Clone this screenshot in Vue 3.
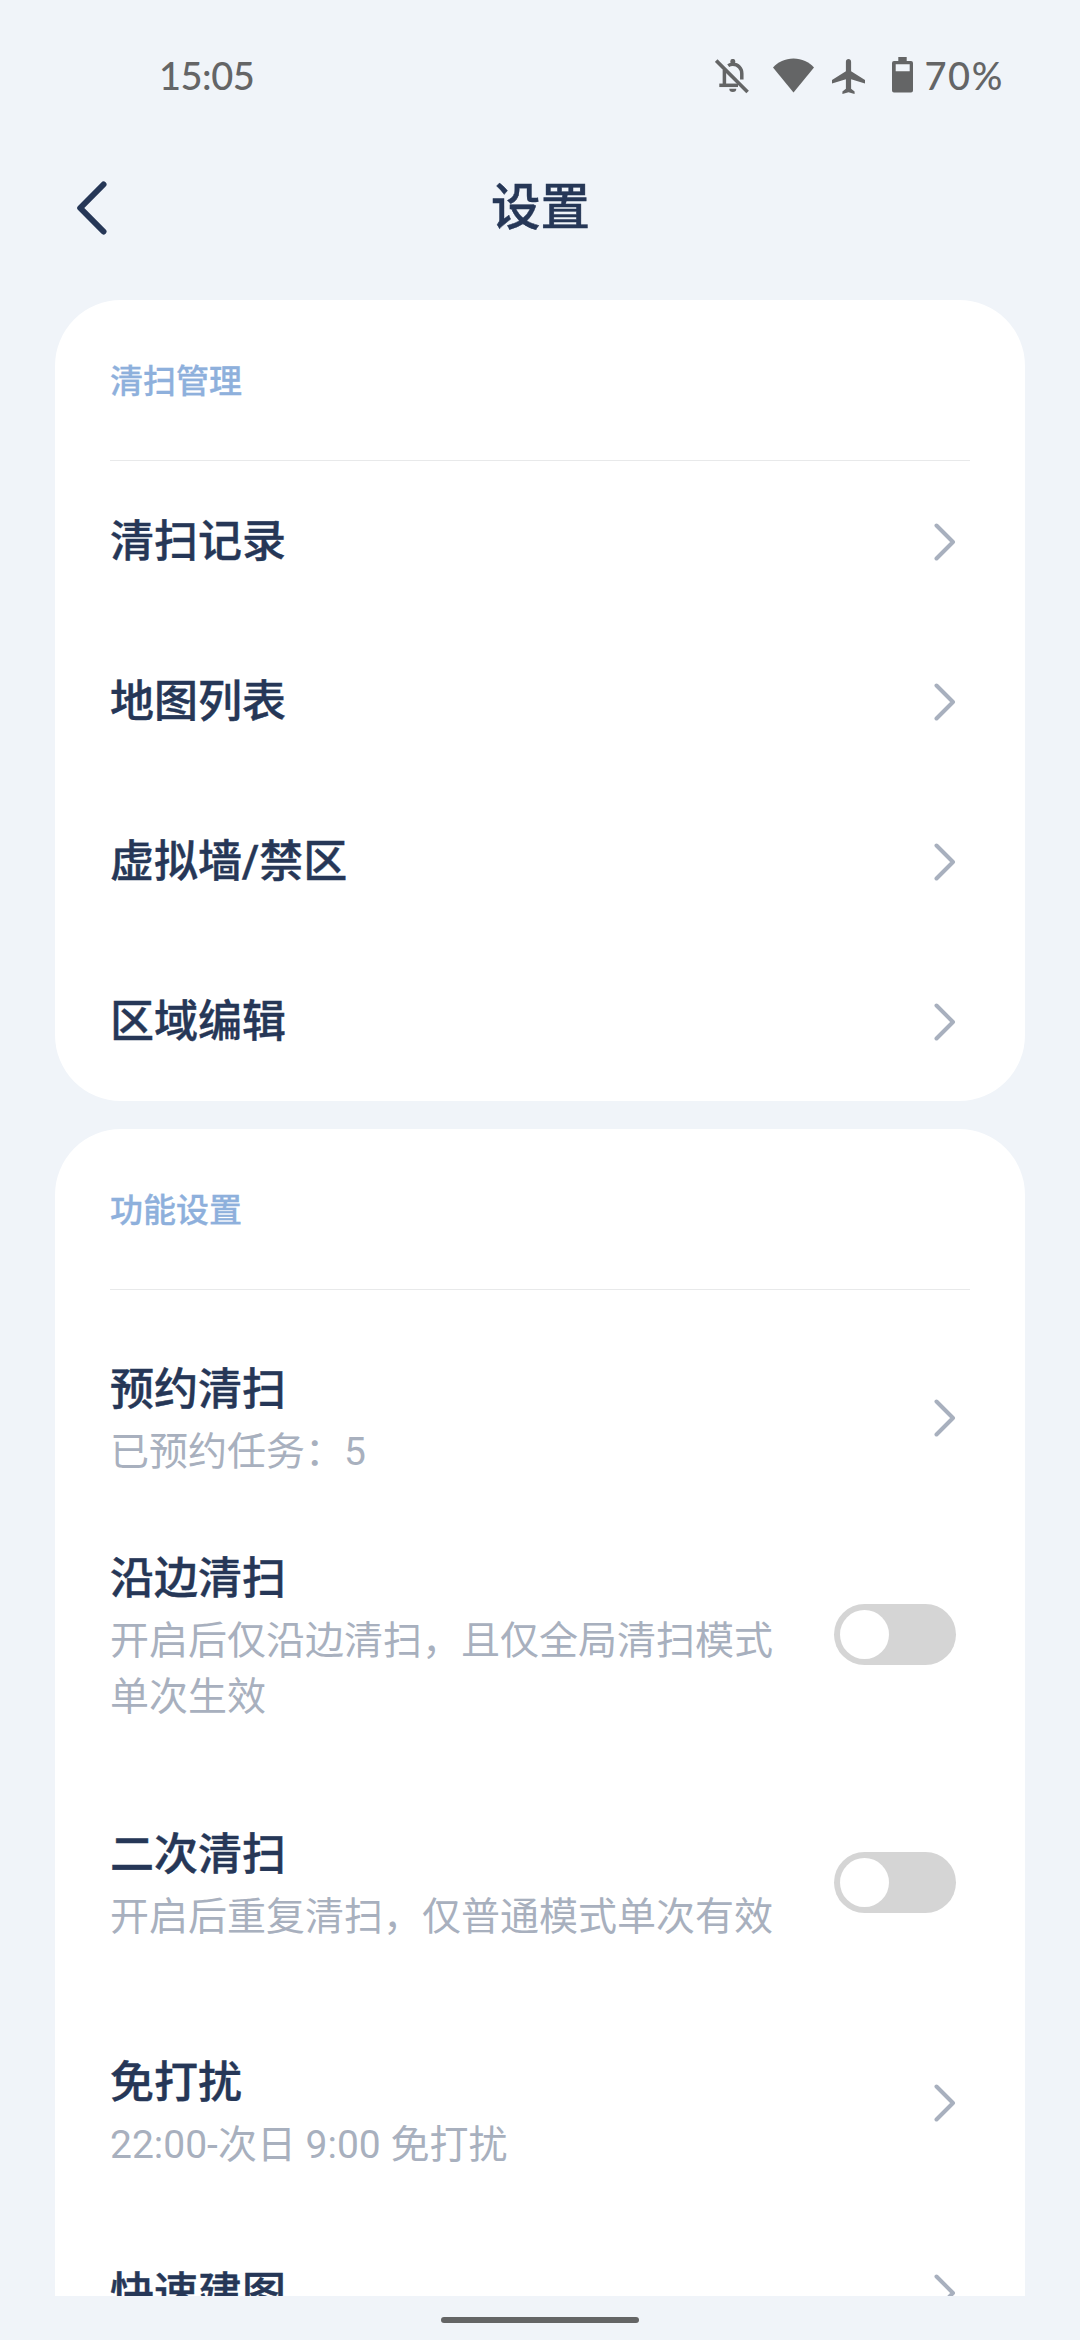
<script setup>
import { ref } from 'vue'

const cleaning = ['清扫记录', '地图列表', '虚拟墙/禁区', '区域编辑']

const features = ref([
  { key: 'schedule', title: '预约清扫', desc: '已预约任务：5' },
  { key: 'edge', title: '沿边清扫', desc: '开启后仅沿边清扫，且仅全局清扫模式单次生效', toggle: true, on: false },
  { key: 'twice', title: '二次清扫', desc: '开启后重复清扫，仅普通模式单次有效', toggle: true, on: false },
  { key: 'quiet', title: '免打扰', desc: '22:00-次日 9:00 免打扰' },
  { key: 'mapping', title: '快速建图' },
])
</script>

<template>
  <div class="screen">
    <div class="status">
      <span class="time">15:05</span>
      <div class="indicators">
        <svg class="bell" width="34" height="35" viewBox="0 0 34 35" fill="none" stroke="#646566">
          <circle cx="17.8" cy="2.4" r="2.5" fill="#646566" stroke="none" />
          <path d="M13.2 6.6C14.6 5.7 16 5.3 17.8 5.3c5.300 0 9 4 9 9.200V20.500M9.400 11V25" stroke-width="3.500" />
          <path d="M4.300 26.300H23" stroke-width="3.500" />
          <path d="M14.300 29.800h7a3.500 3.200 0 0 1-7 0z" fill="#646566" stroke="none" />
          <path d="M1.200 1.600L32.600 33" stroke-width="3.600" />
        </svg>
        <svg class="wifi" width="41" height="35" viewBox="0 0 41 35">
          <path d="M20.5 34.500L0 9.600C5 4 12 .5 20.500 .5S36 4 41 9.600z" fill="#646566" />
        </svg>
        <svg class="plane" width="33" height="35" viewBox="2 2 19 20" preserveAspectRatio="none">
          <path d="M21 16v-2l-8-5V3.500c0-.83-.67-1.500-1.500-1.500S10 2.670 10 3.500V9l-8 5v2l8-2.500V19l-2 1.500V22l3.500-1 3.500 1v-1.500L13 19v-5.500l8 2.500z" fill="#646566" />
        </svg>
        <svg class="battery" width="21" height="36" viewBox="0 0 21 36">
          <path fill-rule="evenodd" d="M6.300 0h8.400v4H19a2 2 0 0 1 2 2v27.500a2 2 0 0 1-2 2H2a2 2 0 0 1-2-2V6a2 2 0 0 1 2-2h4.300zM3.700 7.300v7h14v-7z" fill="#646566" />
        </svg>
        <span class="percent">70%</span>
      </div>
    </div>

    <header class="header">
      <svg class="back" width="32" height="56" viewBox="0 0 32 56" fill="none">
        <path d="M27.500 4.500L4.200 28l23.300 23.500" stroke="#263757" stroke-width="6" stroke-linecap="round" stroke-linejoin="round" />
      </svg>
      <h1>设置</h1>
    </header>

    <main class="content">
      <section class="card">
        <h2>清扫管理</h2>
        <div v-for="name in cleaning" :key="name" class="row plain">
          <span class="title">{{ name }}</span>
          <svg class="chevron" width="22" height="40" viewBox="0 0 22 40" fill="none">
            <path d="M2.500 3.500L19 20 2.500 36.500" />
          </svg>
        </div>
      </section>

      <section class="card features">
        <h2>功能设置</h2>
        <div v-for="item in features" :key="item.key" class="row" :class="item.key">
          <div class="text">
            <div class="title">{{ item.title }}</div>
            <div v-if="item.desc" class="desc">{{ item.desc }}</div>
          </div>
          <button v-if="item.toggle" class="switch" :class="{ on: item.on }" @click="item.on = !item.on">
            <span class="knob"></span>
          </button>
          <svg v-else class="chevron" width="22" height="40" viewBox="0 0 22 40" fill="none">
            <path d="M2.500 3.500L19 20 2.500 36.500" />
          </svg>
        </div>
      </section>
    </main>

    <footer class="nav"><span class="pill"></span></footer>
  </div>
</template>

<style>
body {
  background: #f0f4f9;
}
</style>

<style scoped>
.screen {
  width: 1080px;
  height: 2340px;
  display: flex;
  flex-direction: column;
  overflow: hidden;
  background: #f0f4f9;
  color: #263757;
  font-family: Roboto, "Noto Sans CJK SC", sans-serif;
}

.status {
  height: 152px;
  flex: none;
  display: flex;
  align-items: center;
  justify-content: space-between;
  padding: 0 76px 0 159px;
  box-sizing: border-box;
  color: #646566;
  font-family: Lato, sans-serif;
  font-size: 38px;
  font-weight: 500;
  line-height: 48px;
}

.time {
  margin-bottom: 3px;
  letter-spacing: -0.5px;
}

.percent {
  margin-bottom: 3px;
  letter-spacing: 1.6px;
}

.indicators {
  display: flex;
  align-items: center;
}

.bell { margin: 1px 24px 0 0; }
.wifi { margin: 0 18px 1px 0; }
.plane { margin-right: 27px; }
.battery { margin: 0 11px 2px 0; }

.header {
  height: 108px;
  flex: none;
  display: grid;
  grid-template-columns: 104px 1fr 104px;
  align-items: center;
  margin-bottom: 40px;
}

.back {
  justify-self: end;
  margin: 3px -4px 0 0;
}

h1 {
  margin: 0;
  padding: 4px 0 0 1px;
  font-size: 49.5px;
  line-height: 72px;
  font-weight: 500;
  text-align: center;
  -webkit-text-stroke: 0.4px currentColor;
}

.content {
  flex: 1;
  min-height: 0;
  overflow: hidden;
  display: flex;
  flex-direction: column;
  gap: 28px;
  padding: 0 55px;
}

.card {
  flex: none;
  padding: 0 55px;
  border-radius: 66px;
  background: #fff;
}

.features { padding-bottom: 120px; }

h2 {
  height: 160px;
  margin: 0;
  border-bottom: 1px solid #e8e9ea;
  color: #8eb0dc;
  font-size: 33px;
  line-height: 163px;
  font-weight: 500;
  -webkit-text-stroke: 0.3px currentColor;
}

.row {
  display: flex;
  align-items: center;
  justify-content: space-between;
  padding-right: 14px;
}

.plain { height: 160px; }
.plain .title { padding-top: 2px; }
.schedule { margin-top: 66px; }
.edge { margin-top: 67px; }
.twice { margin-top: 98px; }
.quiet { margin-top: 106px; }
.quiet .chevron { margin-bottom: 15px; }
.mapping { margin-top: 89px; }

.text {
  width: 670px;
  margin: 2px 0 -2px;
}

.title {
  font-size: 44px;
  line-height: 64px;
  font-weight: 500;
  -webkit-text-stroke: 0.4px currentColor;
}

.desc {
  margin-top: 2px;
  color: #a8b0be;
  font-size: 39px;
  line-height: 56px;
}

.chevron {
  flex: none;
  margin-top: 1px;
  stroke: #a8b0be;
  stroke-width: 4;
  stroke-linecap: round;
  stroke-linejoin: round;
}

.switch {
  width: 122px;
  height: 61px;
  flex: none;
  display: flex;
  padding: 6px;
  border: 0;
  border-radius: 31px;
  background: #d5d5d5;
}

.switch.on {
  justify-content: flex-end;
  background: #8eb0dc;
}

.knob {
  width: 49px;
  height: 49px;
  border-radius: 50%;
  background: #fff;
}

.nav {
  height: 44px;
  flex: none;
  display: flex;
  justify-content: center;
  align-items: flex-start;
}

.pill {
  width: 198px;
  height: 6px;
  margin-top: 21px;
  border-radius: 3px;
  background: #646566;
}
</style>
